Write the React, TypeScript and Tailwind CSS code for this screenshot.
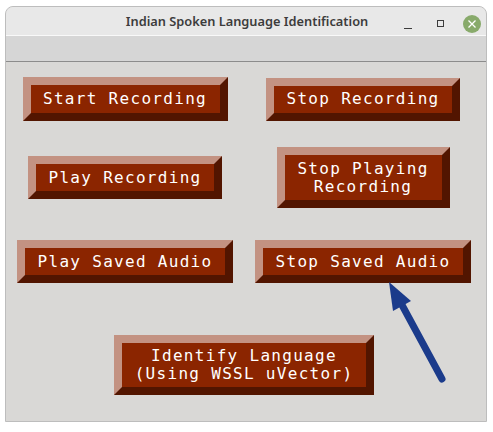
import React from "react";

const mono = { fontFamily: '"DejaVu Sans Mono", "Liberation Mono", monospace' };

function BevelButton({ label, w, h }: { label: string[]; w: string; h: string }) {
  return (
    <button
      className={`${w} ${h} flex flex-col items-center justify-center bg-[#8b2500] border-[8px] border-t-[#c39282] border-l-[#c39282] border-b-[#521500] border-r-[#521500] text-white text-[16px] font-medium leading-[18px] tracking-[1.3px]`}
      style={mono}
    >
      {label.map((l, i) => (
        <span key={i} className="block whitespace-pre">
          {l}
        </span>
      ))}
    </button>
  );
}

export default function App() {
  return (
    <div className="relative w-[493px] h-[432px] bg-white pt-[6px] pl-[5px]">
      <div className="w-[482px] h-[416px] flex flex-col border border-[#bdbdbd] rounded-t-[8px] overflow-hidden bg-[#d9d8d6]">
        {/* title bar */}
        <div className="relative h-[29px] shrink-0 bg-[#e8e8e8] border-b border-[#f9f9f9] flex items-center justify-center">
          <span
            className="text-[12.8px] font-semibold text-[#3c3c3c] pt-[1px] pl-[2px]"
            style={{ fontFamily: '"Noto Sans", "Open Sans", sans-serif' }}
          >
            Indian Spoken Language Identification
          </span>
          <div className="absolute right-[5px] top-[6px] flex items-center">
            <div className="w-[8px] h-[18px] flex items-end pb-[3px] mr-[25px]">
              <div className="w-[8px] h-[1.5px] bg-[#3c3c3c]" />
            </div>
            <div className="w-[7px] h-[7px] border border-[#3c3c3c] mr-[19px]" />
            <div className="w-[18px] h-[18px] mt-[2px] rounded-full bg-[#88aa6b] flex items-center justify-center">
              <svg width="10" height="10" viewBox="0 0 10 10">
                <path d="M1.5 1.5 L8.5 8.5 M8.5 1.5 L1.5 8.5" stroke="white" strokeWidth="1.3" />
              </svg>
            </div>
          </div>
        </div>

        {/* empty menu strip */}
        <div className="h-[26px] shrink-0 bg-[#d6d6d6] border-b border-[#8c8c8c]" />

        {/* buttons */}
        <div className="flex-1 grid grid-cols-[238px_238px] content-start pt-[15px]">
          <div className="h-[44px] flex items-center justify-center">
            <BevelButton label={["Start Recording"]} w="w-[205px]" h="h-[44px]" />
          </div>
          <div className="h-[44px] flex items-center justify-center">
            <BevelButton label={["Stop Recording"]} w="w-[194px]" h="h-[43px]" />
          </div>

          <div className="h-[61px] mt-[26px] flex items-center justify-center">
            <BevelButton label={["Play Recording"]} w="w-[194px]" h="h-[43px]" />
          </div>
          <div className="h-[61px] mt-[26px] flex items-center justify-center">
            <BevelButton label={["Stop Playing", "Recording"]} w="w-[173px]" h="h-[61px]" />
          </div>

          <div className="h-[43px] mt-[32px] flex items-center justify-center">
            <BevelButton label={["Play Saved Audio"]} w="w-[216px]" h="h-[43px]" />
          </div>
          <div className="h-[43px] mt-[32px] flex items-center justify-center">
            <BevelButton label={["Stop Saved Audio"]} w="w-[216px]" h="h-[43px]" />
          </div>

          <div className="col-span-2 h-[60px] mt-[52px] flex items-center justify-center">
            <BevelButton label={["Identify Language", "(Using WSSL uVector)"]} w="w-[260px]" h="h-[60px]" />
          </div>
        </div>
      </div>

      {/* annotation arrow */}
      <svg className="absolute inset-0 pointer-events-none" width="493" height="432" viewBox="0 0 493 432">
        <line x1="442" y1="379" x2="402" y2="305" stroke="#1b3b8b" strokeWidth="7" strokeLinecap="round" />
        <polygon points="389,282 393,311 411,301" fill="#1b3b8b" />
      </svg>
    </div>
  );
}
